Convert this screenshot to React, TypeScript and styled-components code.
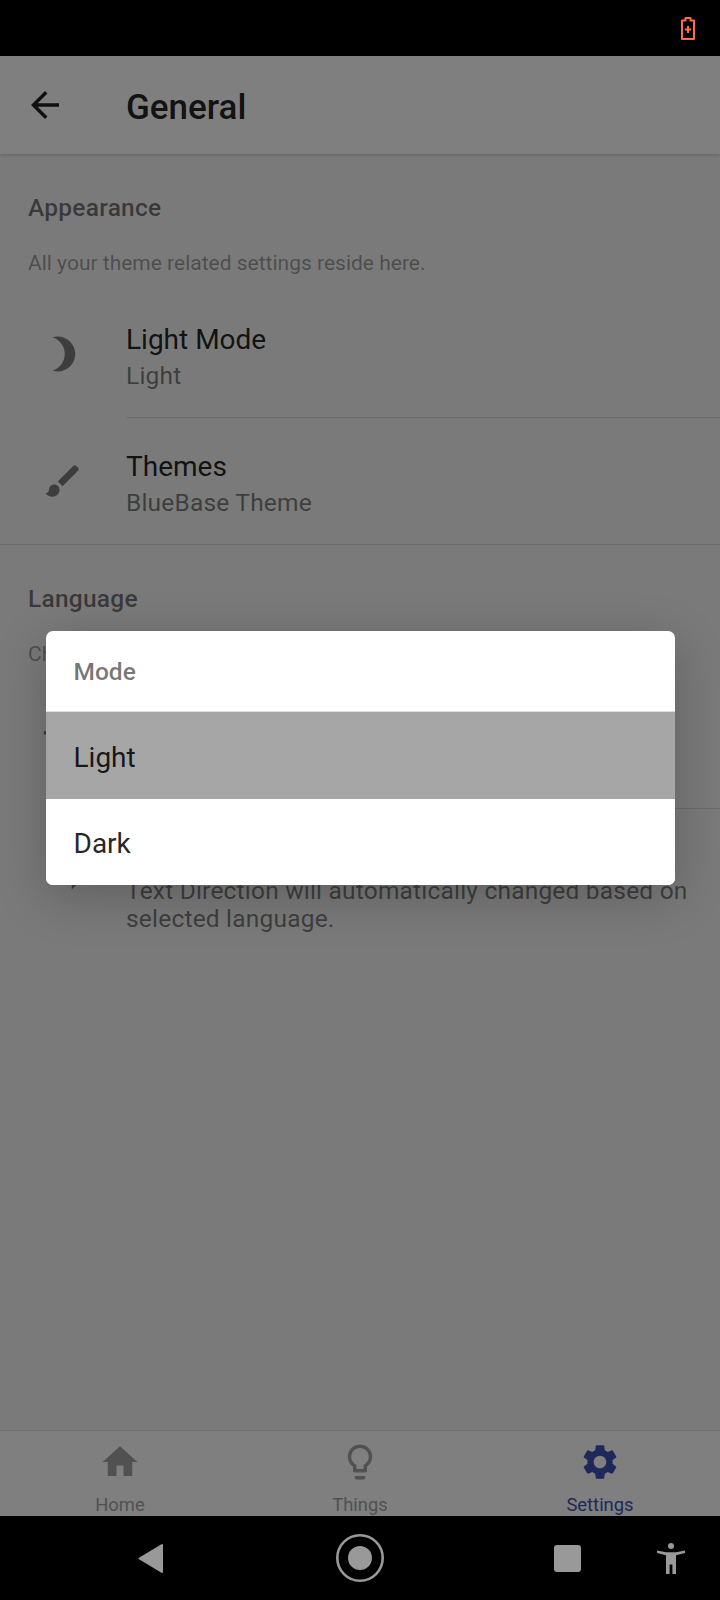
import { createGlobalStyle } from "styled-components";
import styled from "styled-components";
import { MdArrowBack, MdBrightness3, MdBrush, MdHome, MdLightbulbOutline, MdSettings, MdTranslate, MdFormatTextdirectionLToR } from "react-icons/md";

const GlobalStyle = createGlobalStyle`
  html, body {
    margin: 0;
    padding: 0;
    background: #000;
    font-family: Roboto, "Liberation Sans", sans-serif;
  }
`;

const tabs = [
  { label: "Home", icon: <MdHome size={42} />, active: false },
  { label: "Things", icon: <MdLightbulbOutline size={42} />, active: false },
  { label: "Settings", icon: <MdSettings size={42} />, active: true },
];

const App = () => {
  return (
    <Page>
      <GlobalStyle />
      <StatusBar>
        <svg width="14" height="23" viewBox="0 0 14 23">
          <path d="M4.5 1h5v2.5h3.5v18.5H1V3.5h3.5z" fill="none" stroke="#ff6e40" strokeWidth="2" strokeLinejoin="round" />
          <path d="M7 9v7M3.8 12.5h6.4" stroke="#ff6e40" strokeWidth="2" />
        </svg>
      </StatusBar>
      <Screen>
        <Header>
          <BackIcon><MdArrowBack size={42} /></BackIcon>
          <Title>General</Title>
        </Header>
        <Content>
          <Section>
            <SectionTitle>Appearance</SectionTitle>
            <SectionHint>All your theme related settings reside here.</SectionHint>
            <Rows>
              <Row>
                <RowIcon><MdBrightness3 size={42} /></RowIcon>
                <RowText $divider>
                  <RowTitle>Light Mode</RowTitle>
                  <RowValue>Light</RowValue>
                </RowText>
              </Row>
              <Row>
                <RowIcon><MdBrush size={42} /></RowIcon>
                <RowText>
                  <RowTitle>Themes</RowTitle>
                  <RowValue>BlueBase Theme</RowValue>
                </RowText>
              </Row>
            </Rows>
          </Section>
          <Section>
            <SectionTitle>Language</SectionTitle>
            <SectionHint>Choose your preferred language here.</SectionHint>
            <Rows>
              <Row>
                <RowIcon><MdTranslate size={42} /></RowIcon>
                <RowText $divider>
                  <RowTitle>Language</RowTitle>
                  <RowValue>English</RowValue>
                </RowText>
              </Row>
              <Row>
                <RowIcon><MdFormatTextdirectionLToR size={42} /></RowIcon>
                <RowText>
                  <RowTitle>Text Direction</RowTitle>
                  <RowValue $multiline>Text Direction will automatically changed based on selected language.</RowValue>
                </RowText>
              </Row>
            </Rows>
          </Section>
        </Content>
        <TabBar>
          {tabs.map((tab) => (
            <Tab key={tab.label} $active={tab.active}>
              {tab.icon}
              <TabLabel>{tab.label}</TabLabel>
            </Tab>
          ))}
        </TabBar>
        <Scrim>
          <Dialog>
            <DialogTitle>Mode</DialogTitle>
            <DialogItem $selected>Light</DialogItem>
            <DialogItem>Dark</DialogItem>
          </Dialog>
        </Scrim>
      </Screen>
      <NavBar>
        <NavKey $offset={138}>
          <svg width="25" height="29" viewBox="0 0 25 29">
            <path d="M24 1v27L1.5 14.5z" fill="#999" stroke="#999" strokeWidth="2" strokeLinejoin="round" />
          </svg>
        </NavKey>
        <NavKey $offset={173}>
          <svg width="48" height="48" viewBox="0 0 48 48">
            <circle cx="24" cy="24" r="22.7" fill="none" stroke="#999" strokeWidth="2.6" />
            <circle cx="24" cy="24" r="12" fill="#999" />
          </svg>
        </NavKey>
        <NavKey $offset={170}>
          <SquareKey />
        </NavKey>
        <NavKey $offset={76}>
          <svg width="28" height="31" viewBox="0 0 28 31">
            <circle cx="14" cy="3" r="3" fill="#999" />
            <path d="M0 7.5l9 1.7h10l9-1.7v2.4l-9 2.4V31h-3.6v-9.5h-2.8V31H9V12.3L0 9.9z" fill="#999" />
          </svg>
        </NavKey>
      </NavBar>
    </Page>
  );
};

const Page = styled.div`
  display: flex;
  flex-direction: column;
  width: 720px;
  height: 1600px;
  overflow: hidden;
`;

const StatusBar = styled.div`
  display: flex;
  justify-content: flex-end;
  align-items: center;
  flex: 0 0 56px;
  box-sizing: border-box;
  padding: 0 25px 0 0;
  background: #000;
`;

const Screen = styled.div`
  position: relative;
  display: flex;
  flex-direction: column;
  flex: 1;
  min-height: 0;
  background: #f5f5f5;
`;

const Header = styled.div`
  display: flex;
  align-items: center;
  flex: 0 0 98px;
  background: #fff;
  box-shadow: 0 1px 3px rgba(0, 0, 0, 0.2);
`;

const BackIcon = styled.div`
  display: flex;
  flex: 0 0 126px;
  padding-left: 24px;
  box-sizing: border-box;
  color: #212121;
`;

const Title = styled.div`
  padding-top: 4px;
  font-size: 35px;
  font-weight: 500;
  color: rgba(0, 0, 0, 0.87);
`;

const Content = styled.div`
  flex: 1;
  min-height: 0;
`;

const Section = styled.div`
  padding-top: 38px;
  border-bottom: 1px solid rgba(0, 0, 0, 0.12);

  &:last-child {
    border-bottom: none;
  }
`;

const SectionTitle = styled.div`
  padding: 0 28px;
  font-size: 24.5px;
  line-height: 32px;
  font-weight: 500;
  letter-spacing: 0.25px;
  color: rgba(0, 0, 0, 0.54);
`;

const SectionHint = styled.div`
  padding: 0 28px;
  margin-top: 25px;
  font-size: 21px;
  line-height: 28px;
  color: rgba(0, 0, 0, 0.38);
`;

const Rows = styled.div`
  margin-top: 14px;
`;

const Row = styled.div`
  display: flex;
  align-items: flex-start;
`;

const RowIcon = styled.div`
  display: flex;
  justify-content: center;
  flex: 0 0 126px;
  padding-top: 42px;
  color: rgba(0, 0, 0, 0.5);
`;

const RowText = styled.div<{ $divider?: boolean }>`
  flex: 1;
  padding: 31px 20px 27px 0;
  border-bottom: ${(p) => (p.$divider ? "1px solid rgba(0, 0, 0, 0.12)" : "none")};
`;

const RowTitle = styled.div`
  font-size: 28px;
  line-height: 36px;
  color: rgba(0, 0, 0, 0.87);
`;

const RowValue = styled.div<{ $multiline?: boolean }>`
  font-size: 24.5px;
  line-height: ${(p) => (p.$multiline ? "28px" : "29px")};
  padding-top: ${(p) => (p.$multiline ? "1px" : "3px")};
  letter-spacing: 0.2px;
  color: rgba(0, 0, 0, 0.5);
`;

const TabBar = styled.div`
  display: flex;
  flex: 0 0 85px;
  background: #fff;
  border-top: 1px solid rgba(0, 0, 0, 0.12);
  overflow: hidden;
`;

const Tab = styled.div<{ $active: boolean }>`
  display: flex;
  flex-direction: column;
  align-items: center;
  flex: 1;
  padding-top: 10px;
  color: ${(p) => (p.$active ? "#3f51b5" : "#a3a3a3")};
`;

const TabLabel = styled.div`
  font-size: 18.4px;
  line-height: 22px;
  margin-top: 11px;
`;

const Scrim = styled.div`
  position: absolute;
  inset: 0;
  display: flex;
  justify-content: center;
  align-items: flex-start;
  padding-top: 575px;
  background: rgba(0, 0, 0, 0.5);
`;

const Dialog = styled.div`
  width: 629px;
  background: #fff;
  border-radius: 7px;
  overflow: hidden;
  box-shadow: 0 12px 50px rgba(0, 0, 0, 0.22);
`;

const DialogTitle = styled.div`
  display: flex;
  align-items: center;
  height: 80px;
  padding: 0 28px;
  border-bottom: 1px solid #ddd;
  font-size: 24.5px;
  font-weight: 500;
  color: rgba(0, 0, 0, 0.54);
`;

const DialogItem = styled.div<{ $selected?: boolean }>`
  display: flex;
  align-items: center;
  box-sizing: border-box;
  height: ${(p) => (p.$selected ? "87px" : "86px")};
  padding: 3px 28px 0;
  font-size: 28px;
  color: rgba(0, 0, 0, 0.87);
  background: ${(p) => (p.$selected ? "#a6a6a6" : "#fff")};
`;

const NavBar = styled.div`
  display: flex;
  align-items: center;
  flex: 0 0 84px;
  background: #000;
`;

const NavKey = styled.div<{ $offset: number }>`
  display: flex;
  margin-left: ${(p) => p.$offset}px;
`;

const SquareKey = styled.div`
  width: 27px;
  height: 27px;
  background: #999;
  border-radius: 3px;
`;

export default App;
